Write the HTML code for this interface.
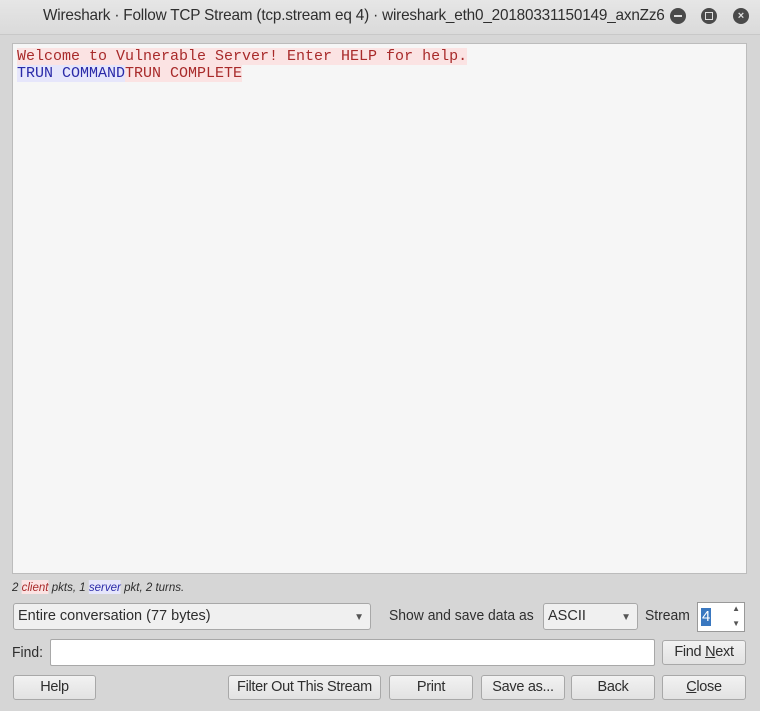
<!DOCTYPE html>
<html><head><meta charset="utf-8"><style>
body{margin:0;width:760px;height:711px;overflow:hidden;background:#d6d6d6;font-family:"Liberation Sans",sans-serif;position:relative}
.title{position:absolute;left:0;top:0;width:760px;height:34px;background:linear-gradient(#e6e6e6,#dadada);border-bottom:1px solid #c8c8c8}
.title span{position:absolute;left:43px;top:7px;font-size:16px;color:#2e2e2e;font-weight:normal;letter-spacing:-0.2px;transform:scaleX(0.958);transform-origin:left;white-space:nowrap}
.wb{position:absolute;top:8px;width:16px;height:16px;border-radius:50%;background:#4a4a4a}
.text{position:absolute;left:12px;top:43px;width:733px;height:529px;background:#f6f6f6;border:1px solid #bcbcbc}
.mono{font-family:"Liberation Mono",monospace;font-size:15px;line-height:17px;position:absolute;left:4px;top:4px;white-space:pre}
.c{color:#a82a2a;background:#fbe3e3}.s{color:#2a2aa8;background:#e6e6fb}
.lbl{position:absolute;font-size:14.5px;color:#2e2e2e;transform:scaleX(0.96);transform-origin:left;white-space:nowrap}
.btn{position:absolute;height:25px;border:1px solid #a8a8a8;border-radius:3px;background:linear-gradient(#f2f2f2,#e2e2e2);font-size:14.5px;color:#2e2e2e;text-align:center;box-sizing:border-box;line-height:23px;white-space:nowrap;letter-spacing:-0.3px}
.combo{position:absolute;height:27px;border:1px solid #a8a8a8;border-radius:3px;background:#f0f0f0;box-sizing:border-box;font-size:14.5px;color:#2e2e2e;line-height:25px;padding-left:4px}
.arr{position:absolute;right:6px;top:0;font-size:10px;color:#555}
</style></head><body>
<div class="title"><span>Wireshark · Follow TCP Stream (tcp.stream eq 4) · wireshark_eth0_20180331150149_axnZz6</span>
<div class="wb" style="left:670px"><div style="position:absolute;left:4px;top:7px;width:8px;height:2px;background:#ddd"></div></div>
<div class="wb" style="left:701px"><div style="position:absolute;left:4px;top:4px;width:6px;height:6px;border:1px solid #ddd"></div></div>
<div class="wb" style="left:733px;color:#ddd;font-size:11px;text-align:center;line-height:16px;font-weight:bold">×</div>
</div>
<div class="text"><div class="mono"><span class="c">Welcome to Vulnerable Server! Enter HELP for help.</span>
<span class="s">TRUN COMMAND</span><span class="c">TRUN COMPLETE</span></div></div>
<div class="lbl" style="left:12px;top:580px;font-size:12px;font-style:italic">2 <span class="c">client</span> pkts, 1 <span class="s">server</span> pkt, 2 turns.</div>
<div class="combo" style="left:13px;top:603px;width:358px">Entire conversation (77 bytes)<span class="arr" style="top:1px">▼</span></div>
<div class="lbl" style="left:389px;top:608px">Show and save data as</div>
<div class="combo" style="left:543px;top:603px;width:95px">ASCII<span class="arr" style="top:1px">▼</span></div>
<div class="lbl" style="left:645px;top:608px">Stream</div>
<div style="position:absolute;left:697px;top:602px;width:48px;height:30px;border:1px solid #999;background:#fff;box-sizing:border-box">
<span style="position:absolute;left:3px;top:5px;background:#3a78c0;color:#fff;font-size:15px;line-height:18px;padding:0 1px">4</span>
<span style="position:absolute;right:4px;top:1px;font-size:8px;color:#555">▲</span><span style="position:absolute;right:4px;top:16px;font-size:8px;color:#555">▼</span></div>
<div class="lbl" style="left:12px;top:645px">Find:</div>
<div style="position:absolute;left:50px;top:639px;width:605px;height:27px;background:#fff;border:1px solid #a8a8a8;border-radius:2px;box-sizing:border-box"></div>
<div class="btn" style="left:662px;top:640px;width:84px">Find <u>N</u>ext</div>
<div class="btn" style="left:13px;top:675px;width:83px">Help</div>
<div class="btn" style="left:228px;top:675px;width:153px">Filter Out This Stream</div>
<div class="btn" style="left:389px;top:675px;width:84px">Print</div>
<div class="btn" style="left:481px;top:675px;width:84px">Save as...</div>
<div class="btn" style="left:571px;top:675px;width:84px">Back</div>
<div class="btn" style="left:662px;top:675px;width:84px"><u>C</u>lose</div>
</body></html>
